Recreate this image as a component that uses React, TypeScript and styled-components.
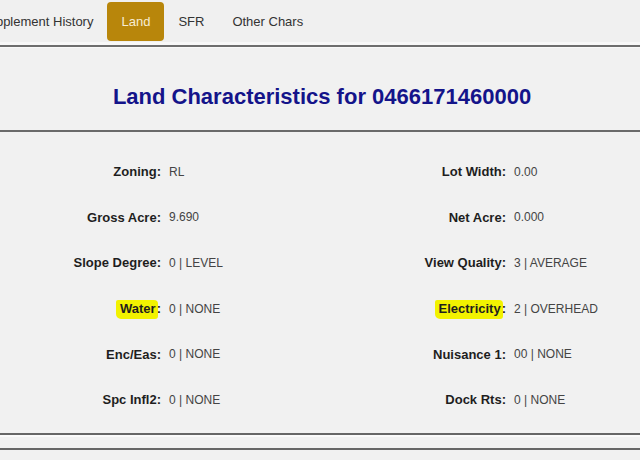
import React from 'react';
import { styled, createGlobalStyle } from 'styled-components';

const GlobalStyle = createGlobalStyle`
  html, body {
    margin: 0;
    padding: 0;
    background: #f1f1f1;
    font-family: "Liberation Sans", Arial, sans-serif;
    overflow: hidden;
  }
`;

const Page = styled.div`
  width: 640px;
  height: 460px;
  overflow: hidden;
  background: #f1f1f1;
`;

const TabBar = styled.div`
  height: 47px;
  box-sizing: border-box;
  padding-top: 2px;
  background: #f0f0f0;
  border-bottom: 2px solid #6e6e6e;
  box-shadow: 0 -3px 0 #f8f8f8 inset;
`;

const TabList = styled.div`
  display: flex;
  margin-left: -34px;
`;

const Tab = styled.div<{ $active?: boolean }>`
  height: 39px;
  padding: 0 14px;
  display: flex;
  align-items: center;
  font-size: 13px;
  color: ${p => (p.$active ? '#f7ecd2' : '#333')};
  background: ${p => (p.$active ? '#b8860b' : 'transparent')};
  border-radius: 4px;
  white-space: nowrap;
`;

const TitlePanel = styled.div`
  height: 85px;
  box-sizing: border-box;
  padding-top: 16px;
  display: flex;
  align-items: center;
  justify-content: center;
  border-bottom: 2px solid #6a6a6a;
  box-shadow: 0 1px 0 #f9f9f9 inset;
`;

const Title = styled.h1`
  margin: 0 0 0 4px;
  font-size: 22px;
  font-weight: bold;
  color: #14148a;
`;

const DataPanel = styled.div`
  height: 303px;
  box-sizing: border-box;
  padding-top: 17px;
  display: grid;
  grid-template-columns: 1fr 1fr;
  grid-auto-rows: 45.6px;
  border-bottom: 2px solid #666;
`;

const Field = styled.div<{ $right?: boolean }>`
  display: grid;
  grid-template-columns: ${p => (p.$right ? '186px' : '161px')} 1fr;
  column-gap: 8px;
  align-items: center;
  font-size: 12px;
`;

const Label = styled.span`
  text-align: right;
  font-size: 13px;
  font-weight: bold;
  color: #1e1e1e;
`;

const Value = styled.span`
  color: #444;
`;

const Marker = styled.span`
  background: #f2f200;
  padding: 1px 2px 3px 4px;
  margin: 0 -1px 0 -4px;
  border-radius: 2px 4px 3px 5px;
`;

const Gap = styled.div`
  height: 13px;
  border-bottom: 2px solid #666;
  box-shadow: 0 2px 0 #fafafa inset;
`;

type Item = { label: string; value: string; mark?: boolean };

const left: Item[] = [
  { label: 'Zoning', value: 'RL' },
  { label: 'Gross Acre', value: '9.690' },
  { label: 'Slope Degree', value: '0 | LEVEL' },
  { label: 'Water', value: '0 | NONE', mark: true },
  { label: 'Enc/Eas', value: '0 | NONE' },
  { label: 'Spc Infl2', value: '0 | NONE' },
];

const right: Item[] = [
  { label: 'Lot Width', value: '0.00' },
  { label: 'Net Acre', value: '0.000' },
  { label: 'View Quality', value: '3 | AVERAGE' },
  { label: 'Electricity', value: '2 | OVERHEAD', mark: true },
  { label: 'Nuisance 1', value: '00 | NONE' },
  { label: 'Dock Rts', value: '0 | NONE' },
];

const FieldRow = ({ item, $right }: { item: Item; $right?: boolean }) => (
  <Field $right={$right}>
    <Label>
      {item.mark ? <Marker>{item.label}</Marker> : item.label}:
    </Label>
    <Value>{item.value}</Value>
  </Field>
);

export default function App() {
  return (
    <Page>
      <GlobalStyle />
      <TabBar>
        <TabList>
          <Tab>Supplement History</Tab>
          <Tab $active>Land</Tab>
          <Tab>SFR</Tab>
          <Tab>Other Chars</Tab>
        </TabList>
      </TabBar>
      <TitlePanel>
        <Title>Land Characteristics for 0466171460000</Title>
      </TitlePanel>
      <DataPanel>
        {left.map((item, i) => (
          <React.Fragment key={item.label}>
            <FieldRow item={item} />
            <FieldRow item={right[i]} $right />
          </React.Fragment>
        ))}
      </DataPanel>
      <Gap />
    </Page>
  );
}
